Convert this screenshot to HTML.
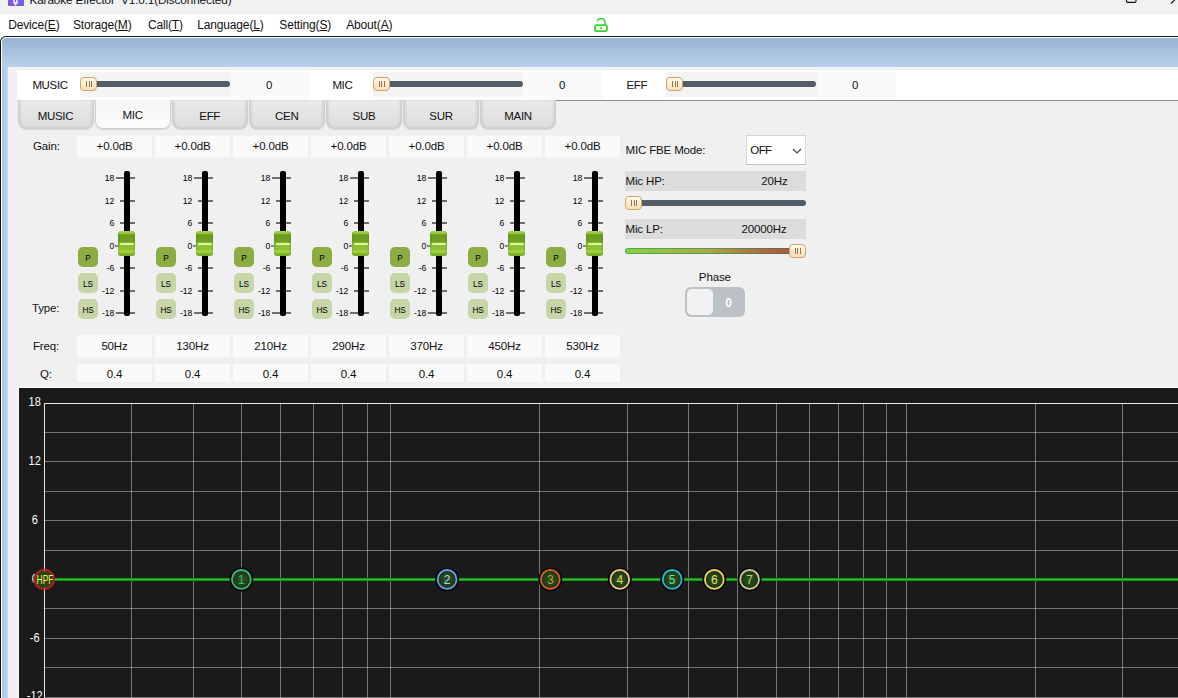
<!DOCTYPE html>
<html lang="en"><head><meta charset="utf-8"><title>Karaoke Effector V1.0.1(Disconnected)</title>
<style>
html,body{margin:0;padding:0;}
body{width:1178px;height:698px;overflow:hidden;position:relative;background:#f0f0f0;font-family:"Liberation Sans",sans-serif;color:#111;}
#app{position:absolute;left:0;top:0;width:1178px;height:698px;overflow:hidden;}
#app div,#app svg{position:absolute;box-sizing:border-box;}
.t{white-space:nowrap;line-height:1;letter-spacing:-0.15px;}
.c{transform:translate(-50%,-50%);}
.cn{transform:translate(-50%,-50%) scaleX(0.86);}
.l{transform:translate(0,-50%);}
.r{transform:translate(-100%,-50%);}
u{text-decoration:underline;text-underline-offset:1px;}
.vb{background:#fafafa;}
.thumb{width:17px;height:14px;border:1px solid #cfa45e;border-radius:4px;background:linear-gradient(#fffaf0,#f9deb8);}
.thumb i{position:absolute;top:3.2px;width:1.1px;height:5.5px;background:#9a7640;}
.trk{height:6px;background:#545c66;border-radius:0 3px 3px 0;}
.tab{height:29px;width:76px;border-radius:0 0 8px 8px;border:1px solid #cfcfcf;border-top:none;background:linear-gradient(#ebebeb,#dddddd);box-shadow:inset 2px 0 3px -1px rgba(0,0,0,0.12),inset -2px 0 3px -1px rgba(0,0,0,0.12),0 1px 1px rgba(0,0,0,0.10);}
.tab.sel{background:linear-gradient(#f6f6f6,#fbfbfb);box-shadow:0 1px 1px rgba(0,0,0,0.12);}
.ftrk{width:6px;background:#000;border-radius:2px;}
.tick{height:2px;background:#6e6e6e;}
.fth{width:17px;height:25px;border-radius:3px;background:linear-gradient(90deg,rgba(0,0,0,0.10),rgba(0,0,0,0) 12%,rgba(0,0,0,0) 88%,rgba(0,0,0,0.10)),linear-gradient(#a2cf46 0%,#9ac93c 9%,#689a1e 16%,#70a224 44%,#84b62c 46%,#8ec432 56%,#8cc232 74%,#a4d444 80%,#9ccc3e 86%,#7eae2a 92%,#78a628 100%);}
.fth i{position:absolute;left:1.5px;top:11.8px;width:14px;height:1.8px;background:#e2f2a4;border-radius:1px;}
.pb{width:20px;height:20px;border-radius:5px;}
.sl{letter-spacing:0;color:#000;}
</style></head><body><div id="app">

<div style="left:0px;top:0px;width:1178px;height:14px;background:#f1f2f4;"></div>
<div style="left:8px;top:0px;width:16px;height:6px;background:#7a5ce0;"></div>
<svg style="left:8px;top:0" width="16" height="6" viewBox="0 0 16 6"><path d="M6 0v3h3V0M7.5 3v2.5" stroke="#fff" stroke-width="1.4" fill="none"/></svg>
<div class="t" id="title" style="left:29.5px;top:-6.3px;font-size:11.7px;letter-spacing:-0.1px;color:#111;">Karaoke Effector&nbsp; V1.0.1(Disconnected)</div>
<svg style="left:1120px;top:0" width="58" height="6" viewBox="0 0 58 6"><path d="M6.5 -2v3.2a1.2 1.2 0 0 0 1.2 1.2h7.1a1.2 1.2 0 0 0 1.2-1.2V-2" stroke="#111" stroke-width="1.1" fill="none"/><path d="M51 3.5L58 -3.5" stroke="#111" stroke-width="1.1" fill="none"/></svg>
<div style="left:0px;top:14px;width:1178px;height:22.5px;background:#fff;"></div>
<div class="t l" style="left:8.2px;top:25.3px;font-size:12px;">Device(<u>E</u>)</div>
<div class="t l" style="left:73.0px;top:25.3px;font-size:12px;">Storage(<u>M</u>)</div>
<div class="t l" style="left:147.89999999999998px;top:25.3px;font-size:12px;">Call(<u>T</u>)</div>
<div class="t l" style="left:197.2px;top:25.3px;font-size:12px;">Language(<u>L</u>)</div>
<div class="t l" style="left:279.3px;top:25.3px;font-size:12px;">Setting(<u>S</u>)</div>
<div class="t l" style="left:346.2px;top:25.3px;font-size:12px;">About(<u>A</u>)</div>
<svg style="left:592px;top:16px" width="20" height="18" viewBox="0 0 20 18"><rect x="3" y="9.2" width="12" height="6" rx="1.5" fill="none" stroke="#34d634" stroke-width="1.8"/><path d="M5.2 5.4A4 4 0 0 1 13 6v3" fill="none" stroke="#34d634" stroke-width="1.5"/><rect x="8.3" y="11" width="1.4" height="2.4" fill="#2fd22f"/></svg>
<div style="left:0px;top:36px;width:1178px;height:680px;background:#111;border-radius:6px 0 0 0;"></div>
<div style="left:1px;top:37px;width:1178px;height:680px;background:#fff;border-radius:5px 0 0 0;"></div>
<div style="left:2px;top:38px;width:1178px;height:680px;background:linear-gradient(#97b3d3 0px,#b9d1ea 29px,#b9d1ea 100%);border-radius:4px 0 0 0;"></div>
<div style="left:2px;top:67px;width:6px;height:640px;background:linear-gradient(90deg,#a6c3e8,#bfd6f2);"></div>
<div style="left:8px;top:67px;width:1170px;height:640px;background:#f0f0f0;"></div>
<div style="left:8px;top:67px;width:1170px;height:3px;background:#eef2f7;"></div>
<div style="left:17px;top:70px;width:1161px;height:30px;background:#fff;"></div>
<div style="left:230px;top:70px;width:80px;height:30px;background:#fafafa;"></div>
<div style="left:523px;top:70px;width:79.5px;height:30px;background:#fafafa;"></div>
<div style="left:816px;top:70px;width:80px;height:30px;background:#fafafa;"></div>
<div style="left:17px;top:100px;width:540px;height:1px;background:#d4d4d4;"></div>
<div style="left:556px;top:100px;width:622px;height:1px;background:#909090;"></div>
<div style="left:80px;top:72px;width:150.5px;height:25px;background:#f4f4f4;"></div>
<div class="t l" style="left:32.4px;top:85.9px;font-size:11.5px;letter-spacing:-0.35px;">MUSIC</div>
<div class="trk" style="left:80px;top:81px;width:150px;"></div><div class="thumb" style="left:80px;top:77px;"><i style="left:5px"></i><i style="left:7.5px"></i><i style="left:10px"></i></div>
<div class="t c" style="left:269px;top:85.5px;font-size:11.5px;">0</div>
<div style="left:372.5px;top:72px;width:150.5px;height:25px;background:#f4f4f4;"></div>
<div class="t l" style="left:332.4px;top:85.9px;font-size:11.5px;letter-spacing:-0.35px;">MIC</div>
<div class="trk" style="left:372.5px;top:81px;width:150px;"></div><div class="thumb" style="left:372.5px;top:77px;"><i style="left:5px"></i><i style="left:7.5px"></i><i style="left:10px"></i></div>
<div class="t c" style="left:562px;top:85.5px;font-size:11.5px;">0</div>
<div style="left:666px;top:72px;width:150.5px;height:25px;background:#f4f4f4;"></div>
<div class="t l" style="left:626.4px;top:85.9px;font-size:11.5px;letter-spacing:-0.35px;">EFF</div>
<div class="trk" style="left:666px;top:81px;width:150px;"></div><div class="thumb" style="left:666px;top:77px;"><i style="left:5px"></i><i style="left:7.5px"></i><i style="left:10px"></i></div>
<div class="t c" style="left:855px;top:85.5px;font-size:11.5px;">0</div>
<div class="tab" style="left:17.5px;top:100px;"></div>
<div class="t c" style="left:55.5px;top:116.6px;font-size:11.5px;letter-spacing:-0.3px;">MUSIC</div>
<div class="tab sel" style="left:94.6px;top:100px;"></div>
<div class="t c" style="left:132.6px;top:115.8px;font-size:11.5px;letter-spacing:-0.3px;">MIC</div>
<div class="tab" style="left:171.7px;top:100px;"></div>
<div class="t c" style="left:209.7px;top:116.6px;font-size:11.5px;letter-spacing:-0.3px;">EFF</div>
<div class="tab" style="left:248.8px;top:100px;"></div>
<div class="t c" style="left:286.79999999999995px;top:116.6px;font-size:11.5px;letter-spacing:-0.3px;">CEN</div>
<div class="tab" style="left:325.9px;top:100px;"></div>
<div class="t c" style="left:363.9px;top:116.6px;font-size:11.5px;letter-spacing:-0.3px;">SUB</div>
<div class="tab" style="left:403.0px;top:100px;"></div>
<div class="t c" style="left:441.0px;top:116.6px;font-size:11.5px;letter-spacing:-0.3px;">SUR</div>
<div class="tab" style="left:480.1px;top:100px;"></div>
<div class="t c" style="left:518.0999999999999px;top:116.6px;font-size:11.5px;letter-spacing:-0.3px;">MAIN</div>
<div class="t l" style="left:33px;top:146.5px;font-size:11.5px;">Gain:</div>
<div class="t l" style="left:32px;top:308.5px;font-size:11.5px;">Type:</div>
<div class="t l" style="left:33px;top:346.5px;font-size:11.5px;">Freq:</div>
<div class="t l" style="left:40px;top:374.5px;font-size:11.5px;">Q:</div>
<div style="left:77px;top:135.5px;width:75px;height:21px;background:#fafafa;"></div>
<div class="t c" style="left:114.5px;top:146.5px;font-size:11.5px;">+0.0dB</div>
<div style="left:77px;top:335px;width:75px;height:22px;background:#fafafa;"></div>
<div class="t c" style="left:114.5px;top:346.5px;font-size:11.5px;">50Hz</div>
<div style="left:77px;top:363.5px;width:75px;height:18.5px;background:#fafafa;"></div>
<div class="t c" style="left:114.5px;top:374.5px;font-size:11.5px;">0.4</div>
<div class="tick" style="left:115.5px;top:177px;width:19px;"></div>
<div class="t sl r" style="left:114.4px;top:178.2px;font-size:8.6px;">18</div>
<div class="tick" style="left:119.5px;top:199.5px;width:15px;"></div>
<div class="t sl r" style="left:114.4px;top:200.7px;font-size:8.6px;">12</div>
<div class="tick" style="left:119.5px;top:222px;width:15px;"></div>
<div class="t sl r" style="left:114.4px;top:223.2px;font-size:8.6px;">6</div>
<div class="tick" style="left:114.5px;top:244.5px;width:20px;background:#7a8a9a"></div>
<div class="t sl r" style="left:114.4px;top:245.7px;font-size:8.6px;">0</div>
<div class="tick" style="left:119.5px;top:267px;width:15px;"></div>
<div class="t sl r" style="left:114.4px;top:268.2px;font-size:8.6px;">-6</div>
<div class="tick" style="left:119.5px;top:289.5px;width:15px;"></div>
<div class="t sl r" style="left:114.4px;top:290.7px;font-size:8.6px;">-12</div>
<div class="tick" style="left:115.5px;top:312px;width:19px;"></div>
<div class="t sl r" style="left:114.4px;top:313.2px;font-size:8.6px;">-18</div>
<div class="ftrk" style="left:124px;top:170.5px;height:145px;"></div>
<div class="fth" style="left:118px;top:231px;"><i></i></div>
<div class="pb" style="left:78px;top:247px;background:#8bad42;"></div>
<div class="t cn" style="left:88px;top:258px;font-size:9.6px;color:#000;">P</div>
<div class="pb" style="left:78px;top:273px;background:#c6d6a8;"></div>
<div class="t cn" style="left:88.3px;top:284.2px;font-size:9.6px;color:#000;">LS</div>
<div class="pb" style="left:78px;top:299px;background:#c6d6a8;"></div>
<div class="t cn" style="left:88.3px;top:310.3px;font-size:9.6px;color:#000;">HS</div>
<div style="left:155px;top:135.5px;width:75px;height:21px;background:#fafafa;"></div>
<div class="t c" style="left:192.5px;top:146.5px;font-size:11.5px;">+0.0dB</div>
<div style="left:155px;top:335px;width:75px;height:22px;background:#fafafa;"></div>
<div class="t c" style="left:192.5px;top:346.5px;font-size:11.5px;">130Hz</div>
<div style="left:155px;top:363.5px;width:75px;height:18.5px;background:#fafafa;"></div>
<div class="t c" style="left:192.5px;top:374.5px;font-size:11.5px;">0.4</div>
<div class="tick" style="left:193.5px;top:177px;width:19px;"></div>
<div class="t sl r" style="left:192.4px;top:178.2px;font-size:8.6px;">18</div>
<div class="tick" style="left:197.5px;top:199.5px;width:15px;"></div>
<div class="t sl r" style="left:192.4px;top:200.7px;font-size:8.6px;">12</div>
<div class="tick" style="left:197.5px;top:222px;width:15px;"></div>
<div class="t sl r" style="left:192.4px;top:223.2px;font-size:8.6px;">6</div>
<div class="tick" style="left:192.5px;top:244.5px;width:20px;background:#7a8a9a"></div>
<div class="t sl r" style="left:192.4px;top:245.7px;font-size:8.6px;">0</div>
<div class="tick" style="left:197.5px;top:267px;width:15px;"></div>
<div class="t sl r" style="left:192.4px;top:268.2px;font-size:8.6px;">-6</div>
<div class="tick" style="left:197.5px;top:289.5px;width:15px;"></div>
<div class="t sl r" style="left:192.4px;top:290.7px;font-size:8.6px;">-12</div>
<div class="tick" style="left:193.5px;top:312px;width:19px;"></div>
<div class="t sl r" style="left:192.4px;top:313.2px;font-size:8.6px;">-18</div>
<div class="ftrk" style="left:202px;top:170.5px;height:145px;"></div>
<div class="fth" style="left:196px;top:231px;"><i></i></div>
<div class="pb" style="left:156px;top:247px;background:#8bad42;"></div>
<div class="t cn" style="left:166px;top:258px;font-size:9.6px;color:#000;">P</div>
<div class="pb" style="left:156px;top:273px;background:#c6d6a8;"></div>
<div class="t cn" style="left:166.3px;top:284.2px;font-size:9.6px;color:#000;">LS</div>
<div class="pb" style="left:156px;top:299px;background:#c6d6a8;"></div>
<div class="t cn" style="left:166.3px;top:310.3px;font-size:9.6px;color:#000;">HS</div>
<div style="left:233px;top:135.5px;width:75px;height:21px;background:#fafafa;"></div>
<div class="t c" style="left:270.5px;top:146.5px;font-size:11.5px;">+0.0dB</div>
<div style="left:233px;top:335px;width:75px;height:22px;background:#fafafa;"></div>
<div class="t c" style="left:270.5px;top:346.5px;font-size:11.5px;">210Hz</div>
<div style="left:233px;top:363.5px;width:75px;height:18.5px;background:#fafafa;"></div>
<div class="t c" style="left:270.5px;top:374.5px;font-size:11.5px;">0.4</div>
<div class="tick" style="left:271.5px;top:177px;width:19px;"></div>
<div class="t sl r" style="left:270.4px;top:178.2px;font-size:8.6px;">18</div>
<div class="tick" style="left:275.5px;top:199.5px;width:15px;"></div>
<div class="t sl r" style="left:270.4px;top:200.7px;font-size:8.6px;">12</div>
<div class="tick" style="left:275.5px;top:222px;width:15px;"></div>
<div class="t sl r" style="left:270.4px;top:223.2px;font-size:8.6px;">6</div>
<div class="tick" style="left:270.5px;top:244.5px;width:20px;background:#7a8a9a"></div>
<div class="t sl r" style="left:270.4px;top:245.7px;font-size:8.6px;">0</div>
<div class="tick" style="left:275.5px;top:267px;width:15px;"></div>
<div class="t sl r" style="left:270.4px;top:268.2px;font-size:8.6px;">-6</div>
<div class="tick" style="left:275.5px;top:289.5px;width:15px;"></div>
<div class="t sl r" style="left:270.4px;top:290.7px;font-size:8.6px;">-12</div>
<div class="tick" style="left:271.5px;top:312px;width:19px;"></div>
<div class="t sl r" style="left:270.4px;top:313.2px;font-size:8.6px;">-18</div>
<div class="ftrk" style="left:280px;top:170.5px;height:145px;"></div>
<div class="fth" style="left:274px;top:231px;"><i></i></div>
<div class="pb" style="left:234px;top:247px;background:#8bad42;"></div>
<div class="t cn" style="left:244px;top:258px;font-size:9.6px;color:#000;">P</div>
<div class="pb" style="left:234px;top:273px;background:#c6d6a8;"></div>
<div class="t cn" style="left:244.3px;top:284.2px;font-size:9.6px;color:#000;">LS</div>
<div class="pb" style="left:234px;top:299px;background:#c6d6a8;"></div>
<div class="t cn" style="left:244.3px;top:310.3px;font-size:9.6px;color:#000;">HS</div>
<div style="left:311px;top:135.5px;width:75px;height:21px;background:#fafafa;"></div>
<div class="t c" style="left:348.5px;top:146.5px;font-size:11.5px;">+0.0dB</div>
<div style="left:311px;top:335px;width:75px;height:22px;background:#fafafa;"></div>
<div class="t c" style="left:348.5px;top:346.5px;font-size:11.5px;">290Hz</div>
<div style="left:311px;top:363.5px;width:75px;height:18.5px;background:#fafafa;"></div>
<div class="t c" style="left:348.5px;top:374.5px;font-size:11.5px;">0.4</div>
<div class="tick" style="left:349.5px;top:177px;width:19px;"></div>
<div class="t sl r" style="left:348.4px;top:178.2px;font-size:8.6px;">18</div>
<div class="tick" style="left:353.5px;top:199.5px;width:15px;"></div>
<div class="t sl r" style="left:348.4px;top:200.7px;font-size:8.6px;">12</div>
<div class="tick" style="left:353.5px;top:222px;width:15px;"></div>
<div class="t sl r" style="left:348.4px;top:223.2px;font-size:8.6px;">6</div>
<div class="tick" style="left:348.5px;top:244.5px;width:20px;background:#7a8a9a"></div>
<div class="t sl r" style="left:348.4px;top:245.7px;font-size:8.6px;">0</div>
<div class="tick" style="left:353.5px;top:267px;width:15px;"></div>
<div class="t sl r" style="left:348.4px;top:268.2px;font-size:8.6px;">-6</div>
<div class="tick" style="left:353.5px;top:289.5px;width:15px;"></div>
<div class="t sl r" style="left:348.4px;top:290.7px;font-size:8.6px;">-12</div>
<div class="tick" style="left:349.5px;top:312px;width:19px;"></div>
<div class="t sl r" style="left:348.4px;top:313.2px;font-size:8.6px;">-18</div>
<div class="ftrk" style="left:358px;top:170.5px;height:145px;"></div>
<div class="fth" style="left:352px;top:231px;"><i></i></div>
<div class="pb" style="left:312px;top:247px;background:#8bad42;"></div>
<div class="t cn" style="left:322px;top:258px;font-size:9.6px;color:#000;">P</div>
<div class="pb" style="left:312px;top:273px;background:#c6d6a8;"></div>
<div class="t cn" style="left:322.3px;top:284.2px;font-size:9.6px;color:#000;">LS</div>
<div class="pb" style="left:312px;top:299px;background:#c6d6a8;"></div>
<div class="t cn" style="left:322.3px;top:310.3px;font-size:9.6px;color:#000;">HS</div>
<div style="left:389px;top:135.5px;width:75px;height:21px;background:#fafafa;"></div>
<div class="t c" style="left:426.5px;top:146.5px;font-size:11.5px;">+0.0dB</div>
<div style="left:389px;top:335px;width:75px;height:22px;background:#fafafa;"></div>
<div class="t c" style="left:426.5px;top:346.5px;font-size:11.5px;">370Hz</div>
<div style="left:389px;top:363.5px;width:75px;height:18.5px;background:#fafafa;"></div>
<div class="t c" style="left:426.5px;top:374.5px;font-size:11.5px;">0.4</div>
<div class="tick" style="left:427.5px;top:177px;width:19px;"></div>
<div class="t sl r" style="left:426.4px;top:178.2px;font-size:8.6px;">18</div>
<div class="tick" style="left:431.5px;top:199.5px;width:15px;"></div>
<div class="t sl r" style="left:426.4px;top:200.7px;font-size:8.6px;">12</div>
<div class="tick" style="left:431.5px;top:222px;width:15px;"></div>
<div class="t sl r" style="left:426.4px;top:223.2px;font-size:8.6px;">6</div>
<div class="tick" style="left:426.5px;top:244.5px;width:20px;background:#7a8a9a"></div>
<div class="t sl r" style="left:426.4px;top:245.7px;font-size:8.6px;">0</div>
<div class="tick" style="left:431.5px;top:267px;width:15px;"></div>
<div class="t sl r" style="left:426.4px;top:268.2px;font-size:8.6px;">-6</div>
<div class="tick" style="left:431.5px;top:289.5px;width:15px;"></div>
<div class="t sl r" style="left:426.4px;top:290.7px;font-size:8.6px;">-12</div>
<div class="tick" style="left:427.5px;top:312px;width:19px;"></div>
<div class="t sl r" style="left:426.4px;top:313.2px;font-size:8.6px;">-18</div>
<div class="ftrk" style="left:436px;top:170.5px;height:145px;"></div>
<div class="fth" style="left:430px;top:231px;"><i></i></div>
<div class="pb" style="left:390px;top:247px;background:#8bad42;"></div>
<div class="t cn" style="left:400px;top:258px;font-size:9.6px;color:#000;">P</div>
<div class="pb" style="left:390px;top:273px;background:#c6d6a8;"></div>
<div class="t cn" style="left:400.3px;top:284.2px;font-size:9.6px;color:#000;">LS</div>
<div class="pb" style="left:390px;top:299px;background:#c6d6a8;"></div>
<div class="t cn" style="left:400.3px;top:310.3px;font-size:9.6px;color:#000;">HS</div>
<div style="left:467px;top:135.5px;width:75px;height:21px;background:#fafafa;"></div>
<div class="t c" style="left:504.5px;top:146.5px;font-size:11.5px;">+0.0dB</div>
<div style="left:467px;top:335px;width:75px;height:22px;background:#fafafa;"></div>
<div class="t c" style="left:504.5px;top:346.5px;font-size:11.5px;">450Hz</div>
<div style="left:467px;top:363.5px;width:75px;height:18.5px;background:#fafafa;"></div>
<div class="t c" style="left:504.5px;top:374.5px;font-size:11.5px;">0.4</div>
<div class="tick" style="left:505.5px;top:177px;width:19px;"></div>
<div class="t sl r" style="left:504.4px;top:178.2px;font-size:8.6px;">18</div>
<div class="tick" style="left:509.5px;top:199.5px;width:15px;"></div>
<div class="t sl r" style="left:504.4px;top:200.7px;font-size:8.6px;">12</div>
<div class="tick" style="left:509.5px;top:222px;width:15px;"></div>
<div class="t sl r" style="left:504.4px;top:223.2px;font-size:8.6px;">6</div>
<div class="tick" style="left:504.5px;top:244.5px;width:20px;background:#7a8a9a"></div>
<div class="t sl r" style="left:504.4px;top:245.7px;font-size:8.6px;">0</div>
<div class="tick" style="left:509.5px;top:267px;width:15px;"></div>
<div class="t sl r" style="left:504.4px;top:268.2px;font-size:8.6px;">-6</div>
<div class="tick" style="left:509.5px;top:289.5px;width:15px;"></div>
<div class="t sl r" style="left:504.4px;top:290.7px;font-size:8.6px;">-12</div>
<div class="tick" style="left:505.5px;top:312px;width:19px;"></div>
<div class="t sl r" style="left:504.4px;top:313.2px;font-size:8.6px;">-18</div>
<div class="ftrk" style="left:514px;top:170.5px;height:145px;"></div>
<div class="fth" style="left:508px;top:231px;"><i></i></div>
<div class="pb" style="left:468px;top:247px;background:#8bad42;"></div>
<div class="t cn" style="left:478px;top:258px;font-size:9.6px;color:#000;">P</div>
<div class="pb" style="left:468px;top:273px;background:#c6d6a8;"></div>
<div class="t cn" style="left:478.3px;top:284.2px;font-size:9.6px;color:#000;">LS</div>
<div class="pb" style="left:468px;top:299px;background:#c6d6a8;"></div>
<div class="t cn" style="left:478.3px;top:310.3px;font-size:9.6px;color:#000;">HS</div>
<div style="left:545px;top:135.5px;width:75px;height:21px;background:#fafafa;"></div>
<div class="t c" style="left:582.5px;top:146.5px;font-size:11.5px;">+0.0dB</div>
<div style="left:545px;top:335px;width:75px;height:22px;background:#fafafa;"></div>
<div class="t c" style="left:582.5px;top:346.5px;font-size:11.5px;">530Hz</div>
<div style="left:545px;top:363.5px;width:75px;height:18.5px;background:#fafafa;"></div>
<div class="t c" style="left:582.5px;top:374.5px;font-size:11.5px;">0.4</div>
<div class="tick" style="left:583.5px;top:177px;width:19px;"></div>
<div class="t sl r" style="left:582.4px;top:178.2px;font-size:8.6px;">18</div>
<div class="tick" style="left:587.5px;top:199.5px;width:15px;"></div>
<div class="t sl r" style="left:582.4px;top:200.7px;font-size:8.6px;">12</div>
<div class="tick" style="left:587.5px;top:222px;width:15px;"></div>
<div class="t sl r" style="left:582.4px;top:223.2px;font-size:8.6px;">6</div>
<div class="tick" style="left:582.5px;top:244.5px;width:20px;background:#7a8a9a"></div>
<div class="t sl r" style="left:582.4px;top:245.7px;font-size:8.6px;">0</div>
<div class="tick" style="left:587.5px;top:267px;width:15px;"></div>
<div class="t sl r" style="left:582.4px;top:268.2px;font-size:8.6px;">-6</div>
<div class="tick" style="left:587.5px;top:289.5px;width:15px;"></div>
<div class="t sl r" style="left:582.4px;top:290.7px;font-size:8.6px;">-12</div>
<div class="tick" style="left:583.5px;top:312px;width:19px;"></div>
<div class="t sl r" style="left:582.4px;top:313.2px;font-size:8.6px;">-18</div>
<div class="ftrk" style="left:592px;top:170.5px;height:145px;"></div>
<div class="fth" style="left:586px;top:231px;"><i></i></div>
<div class="pb" style="left:546px;top:247px;background:#8bad42;"></div>
<div class="t cn" style="left:556px;top:258px;font-size:9.6px;color:#000;">P</div>
<div class="pb" style="left:546px;top:273px;background:#c6d6a8;"></div>
<div class="t cn" style="left:556.3px;top:284.2px;font-size:9.6px;color:#000;">LS</div>
<div class="pb" style="left:546px;top:299px;background:#c6d6a8;"></div>
<div class="t cn" style="left:556.3px;top:310.3px;font-size:9.6px;color:#000;">HS</div>
<div class="t l" style="left:625.5px;top:150.5px;font-size:11.5px;">MIC FBE Mode:</div>
<div style="left:746.4px;top:135.2px;width:59.3px;height:29.5px;background:#fff;border:1px solid #d6d6d6;border-bottom-color:#c4c4c4;"></div>
<div class="t l" style="left:750.3px;top:150.5px;font-size:11.5px;letter-spacing:-0.6px;">OFF</div>
<svg style="left:791px;top:146px" width="12" height="10" viewBox="0 0 12 10"><path d="M2 3L6 7L10 3" fill="none" stroke="#444" stroke-width="1.1"/></svg>
<div style="left:625px;top:171px;width:180.5px;height:19.5px;background:#dcdcdc;"></div>
<div class="t l" style="left:625.5px;top:181.5px;font-size:11.5px;">Mic HP:</div>
<div class="t r" style="left:787.5px;top:181.5px;font-size:11.5px;">20Hz</div>
<div class="trk" style="left:625px;top:200px;width:180.5px;"></div><div class="thumb" style="left:625px;top:196px;"><i style="left:5px"></i><i style="left:7.5px"></i><i style="left:10px"></i></div>
<div style="left:625px;top:219px;width:180.5px;height:19.5px;background:#dcdcdc;"></div>
<div class="t l" style="left:625.5px;top:229.5px;font-size:11.5px;">Mic LP:</div>
<div class="t r" style="left:786.5px;top:229.5px;font-size:11.5px;">20000Hz</div>
<div class="trk" style="left:625px;top:248px;width:180.5px;background:linear-gradient(90deg,#3fae5e,#4a9a62 50%,#565e68);border-radius:3px;"></div><div class="trk" style="left:626px;top:249px;width:178.5px;height:4px;background:linear-gradient(90deg,#8ed03c,#b4a63e 45%,#b86a3a 75%,#b84c38);border-radius:2px;"></div><div class="thumb" style="left:788.5px;top:244px;"><i style="left:5px"></i><i style="left:7.5px"></i><i style="left:10px"></i></div>
<div class="t c" style="left:714.8px;top:277.5px;font-size:11.5px;">Phase</div>
<div style="left:685px;top:287px;width:60px;height:30px;background:#bcc1c6;border-radius:6px;"></div>
<div style="left:687px;top:289px;width:26px;height:26px;background:#f2f2f2;border-radius:5px;"></div>
<div class="t c" style="left:728.6px;top:302.5px;font-size:12px;color:#fff;font-weight:bold;">0</div>
<svg style="left:18px;top:387px" width="1160" height="311" viewBox="18 387 1160 311" font-family="Liberation Sans, sans-serif"><defs><radialGradient id="mg"><stop offset="0" stop-color="#2a5420"/><stop offset="0.7" stop-color="#223f19"/><stop offset="1" stop-color="#152810"/></radialGradient></defs><rect x="18" y="387" width="1160" height="311" fill="#fdfdfd"/><rect x="19" y="388" width="1159" height="310" fill="#1a1a1a"/><path d="M131.5 404V698M193.5 404V698M241.5 404V698M280.5 404V698M313.5 404V698M342.5 404V698M367.5 404V698M390.5 404V698M539.5 404V698M627.5 404V698M688.5 404V698M737.5 404V698M776.5 404V698M809.5 404V698M838.5 404V698M863.5 404V698M886.5 404V698M906.5 404V698M1035.5 404V698M1122.5 404V698" stroke="rgba(255,255,255,0.40)" stroke-width="1" fill="none" shape-rendering="crispEdges"/><path d="M45 432.5H1178M45 461.5H1178M45 491.5H1178M45 520.5H1178M45 550.5H1178M45 579.5H1178M45 608.5H1178M45 638.5H1178M45 667.5H1178M45 697.5H1178" stroke="rgba(255,255,255,0.40)" stroke-width="1" fill="none" shape-rendering="crispEdges"/><path d="M44.5 403V698M44 403.5H1178" stroke="#e6e6e6" stroke-width="1" fill="none" shape-rendering="crispEdges"/><text transform="translate(34.7,406.2) scale(0.88,1)" font-size="12.5" fill="#fff" text-anchor="middle">18</text><text transform="translate(34.7,465.0) scale(0.88,1)" font-size="12.5" fill="#fff" text-anchor="middle">12</text><text transform="translate(34.7,523.9) scale(0.88,1)" font-size="12.5" fill="#fff" text-anchor="middle">6</text><text transform="translate(34.7,582.7) scale(0.88,1)" font-size="12.5" fill="#fff" text-anchor="middle">0</text><text transform="translate(34.7,641.6) scale(0.88,1)" font-size="12.5" fill="#fff" text-anchor="middle">-6</text><text transform="translate(34.7,700.4) scale(0.88,1)" font-size="12.5" fill="#fff" text-anchor="middle">-12</text><path d="M44 579.4H1178" stroke="#0a5a0a" stroke-width="3.4" fill="none"/><path d="M44 579.4H1178" stroke="#2cc42c" stroke-width="2" fill="none"/><circle cx="44.3" cy="579.4" r="9.6" fill="#27441a" stroke="#a61e1e" stroke-width="2.3"/><path d="M44.5 569v2.6M44.5 587.4v2.6" stroke="#e05a5a" stroke-width="1"/><text x="36.6" y="584" font-size="12.6" fill="#f4f43a" textLength="16.8" lengthAdjust="spacingAndGlyphs">HPF</text><circle cx="241.4" cy="579.4" r="12" fill="#0a0a0a"/><circle cx="241.4" cy="579.4" r="9.4" fill="url(#mg)" stroke="#3cb878" stroke-width="1.8"/><text x="241.4" y="583.6" font-size="12" fill="#3cb878" text-anchor="middle">1</text><circle cx="447.1" cy="579.4" r="12" fill="#0a0a0a"/><circle cx="447.1" cy="579.4" r="9.4" fill="url(#mg)" stroke="#6a9ee6" stroke-width="1.8"/><text x="447.1" y="583.6" font-size="12" fill="#a8dcea" text-anchor="middle">2</text><circle cx="550.3" cy="579.4" r="12" fill="#0a0a0a"/><circle cx="550.3" cy="579.4" r="9.4" fill="url(#mg)" stroke="#d4621e" stroke-width="1.8"/><text x="550.3" y="583.6" font-size="12" fill="#c8922c" text-anchor="middle">3</text><circle cx="619.8" cy="579.4" r="12" fill="#0a0a0a"/><circle cx="619.8" cy="579.4" r="9.4" fill="url(#mg)" stroke="#f2c486" stroke-width="1.8"/><text x="619.8" y="583.6" font-size="12" fill="#f2d25e" text-anchor="middle">4</text><circle cx="672.2" cy="579.4" r="12" fill="#0a0a0a"/><circle cx="672.2" cy="579.4" r="9.4" fill="url(#mg)" stroke="#2eb8cc" stroke-width="1.8"/><text x="672.2" y="583.6" font-size="12" fill="#5ee6a0" text-anchor="middle">5</text><circle cx="714.3" cy="579.4" r="12" fill="#0a0a0a"/><circle cx="714.3" cy="579.4" r="9.4" fill="url(#mg)" stroke="#ead25e" stroke-width="1.8"/><text x="714.3" y="583.6" font-size="12" fill="#ece45e" text-anchor="middle">6</text><circle cx="749.6" cy="579.4" r="12" fill="#0a0a0a"/><circle cx="749.6" cy="579.4" r="9.4" fill="url(#mg)" stroke="#c8ca92" stroke-width="1.8"/><text x="749.6" y="583.6" font-size="12" fill="#b4d46e" text-anchor="middle">7</text></svg>
</div></body></html>
